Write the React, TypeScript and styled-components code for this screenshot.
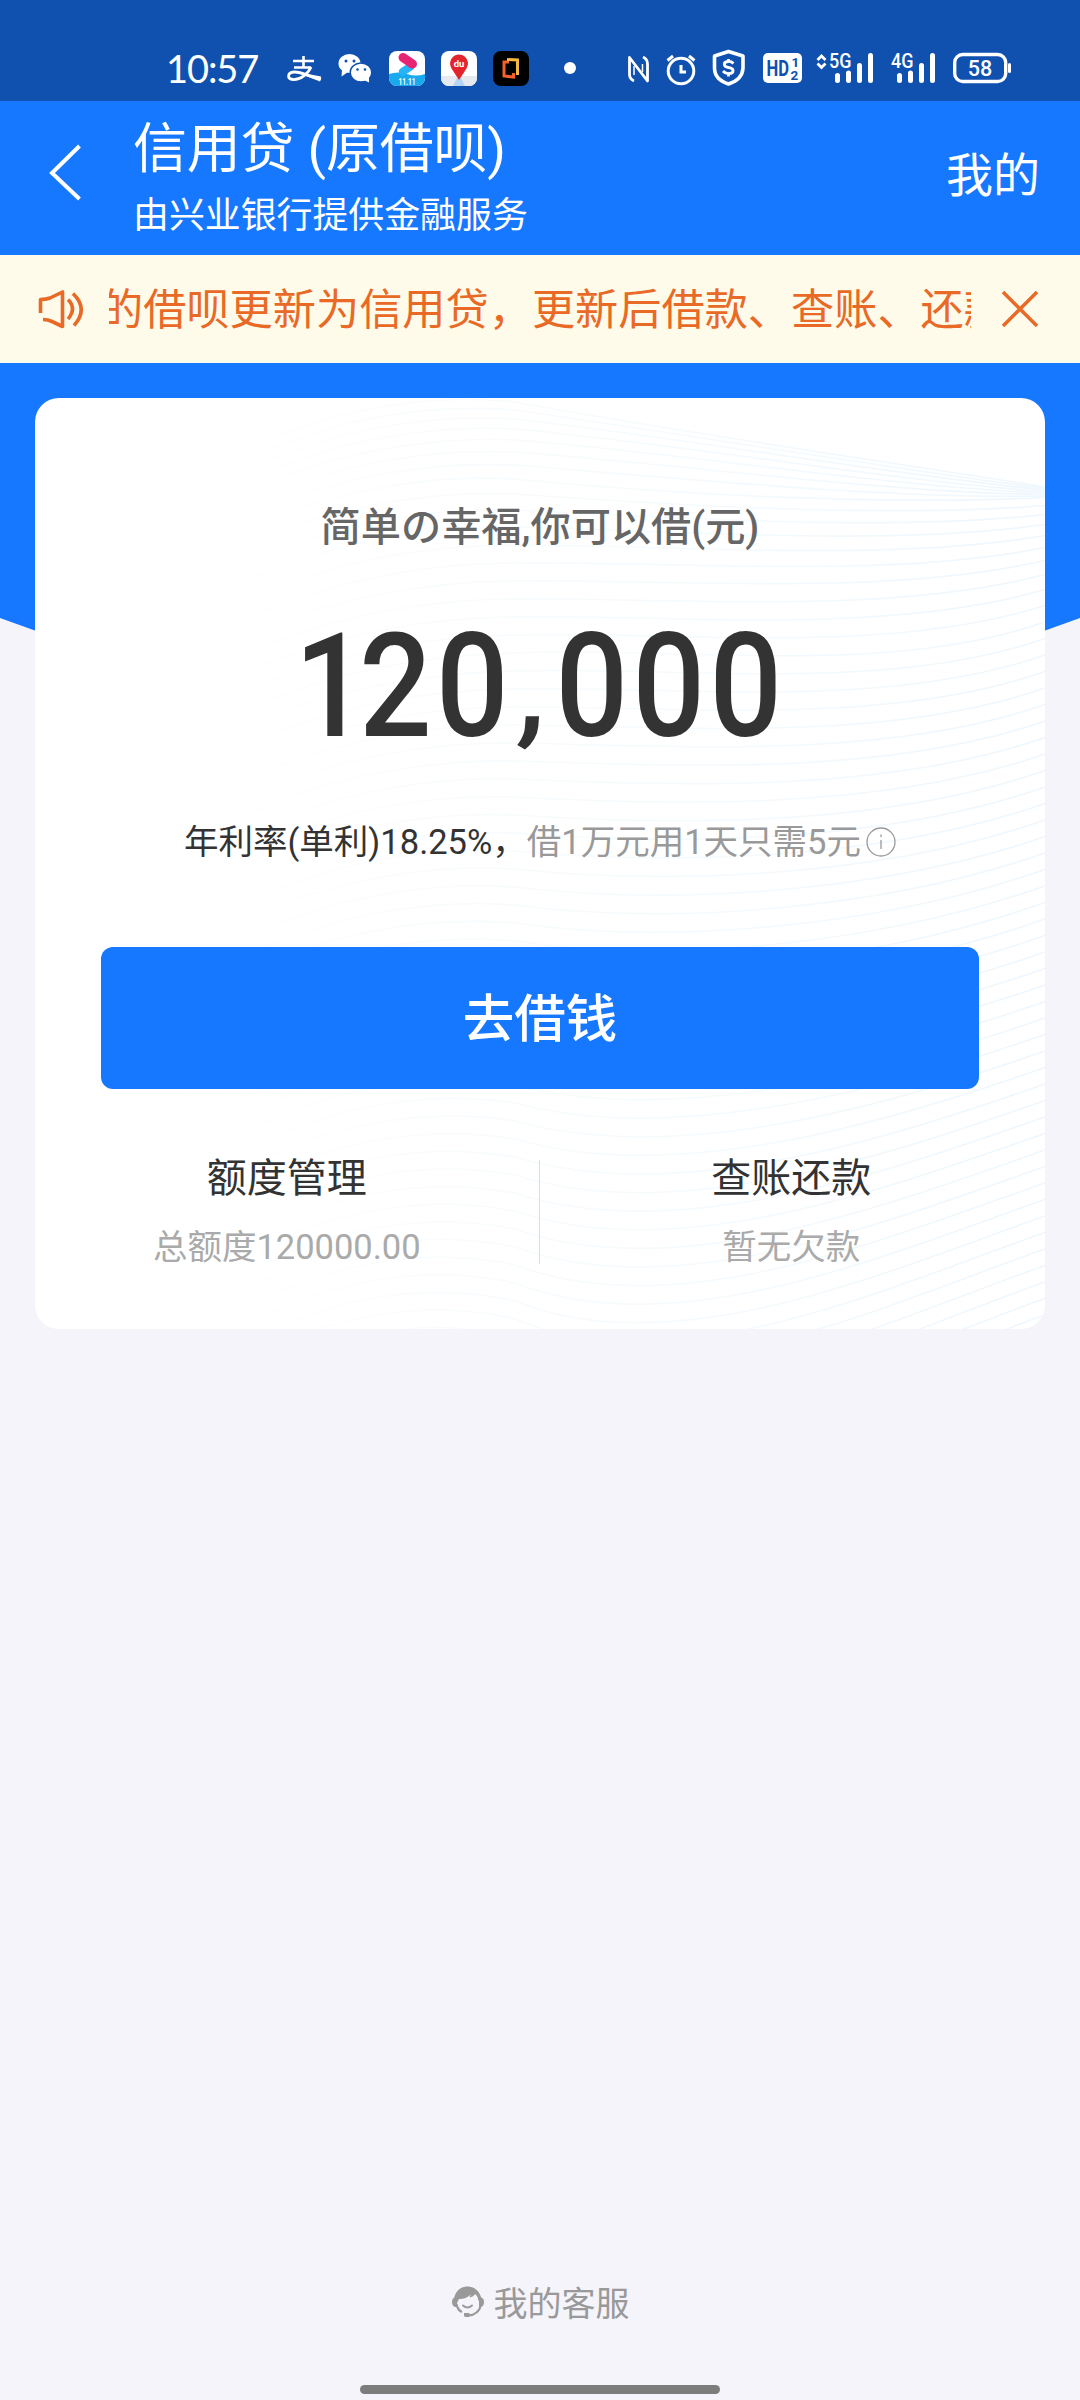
import React from 'react';
import styled, { createGlobalStyle } from 'styled-components';

const cjk = `'Noto Sans CJK SC', sans-serif`;

const Global = createGlobalStyle`
  body { margin: 0; background: #f4f4fa; }
  * { box-sizing: border-box; }
`;

const Page = styled.div`
  width: 1080px;
  height: 2400px;
  display: flex;
  flex-direction: column;
  background: #f4f4fa;
  font-family: Roboto, ${cjk};
  overflow: hidden;
`;

const StatusBar = styled.div`
  height: 101px;
  flex: none;
  display: flex;
  align-items: center;
  padding: 35px 0 0 166px;
  background: #1051b0;
  color: #fff;
`;

const Clock = styled.span`
  width: 121px;
  font: 400 38px/40px Lato, sans-serif;
  letter-spacing: -1.1px;
  white-space: nowrap;
`;

const StatusIcons = styled.svg`
  display: block;
  width: 740px;
  height: 56px;
`;

const Nav = styled.header`
  height: 154px;
  flex: none;
  display: flex;
  align-items: center;
  padding: 0 40px 0 47px;
  background: #1677ff;
  color: #fff;
`;

const BackIcon = styled.svg`
  width: 34px;
  height: 58px;
  margin: -12px 52px 0 0;
`;

const Titles = styled.div`
  flex: 1;
`;

const Title = styled.h1`
  margin: 0;
  font: 400 54px/67px Roboto, ${cjk};
  letter-spacing: -0.2px;
  white-space: pre;
`;

const Subtitle = styled.p`
  margin: 0;
  font: 400 35.9px/58px ${cjk};
`;

const Mine = styled.span`
  font: 400 47px/60px ${cjk};
  padding-bottom: 13px;
`;

const Notice = styled.div`
  height: 108px;
  flex: none;
  display: flex;
  align-items: center;
  padding: 0 42px 0 38px;
  background: #fffbeb;
  color: #e86a26;
`;

const NoticeIcon = styled.svg`
  width: 46px;
  height: 42px;
  flex: none;
`;

const NoticeText = styled.div`
  width: 862px;
  margin: -6px 0 0 25px;
  overflow: hidden;
  display: flex;
  white-space: nowrap;
  font: 400 43.2px/64px ${cjk};
`;

const NoticeRun = styled.span`
  margin-left: -9px;
`;

const CloseIcon = styled.svg`
  width: 36px;
  height: 36px;
  margin-left: 31px;
  flex: none;
`;

const Hero = styled.main`
  flex: none;
  height: 966px;
  padding: 35px 35px 0;
  background: linear-gradient(#1677ff, #1677ff) 0 0 / 100% 255px no-repeat;
  position: relative;
`;

const HeroCurve = styled.svg`
  position: absolute;
  left: 0;
  top: 255px;
  width: 1080px;
  height: 100px;
`;

const Card = styled.section`
  position: relative;
  height: 931px;
  display: flex;
  flex-direction: column;
  align-items: center;
  border-radius: 24px;
  background: #fff;
  overflow: hidden;
`;

const Waves = styled.svg`
  position: absolute;
  inset: 0;
  width: 1010px;
  height: 931px;
`;

const Greeting = styled.div`
  position: relative;
  margin-top: 100px;
  font: 500 40.2px/60px Roboto, ${cjk};
  color: #666;
`;

const Amount = styled.div`
  position: relative;
  margin-top: 43px;
  font: 500 145px/170px Roboto, sans-serif;
  letter-spacing: 5px;
  color: #333;
  transform: scaleX(0.88);
`;

const LeadDigit = styled.span`
  margin-right: -14px;
`;

const Comma = styled.span`
  display: inline-block;
  margin: 0 6px 0 5px;
  transform-origin: 50% 70%;
  transform: translateY(-3px) scaleY(0.84) skewX(-4deg);
`;

const Rate = styled.div`
  position: relative;
  margin-top: 46px;
  display: flex;
  align-items: center;
  font: 400 34.5px/50px Roboto, ${cjk};
  color: #333;
  white-space: nowrap;
`;

const RateHint = styled.span`
  color: #999;
`;

const InfoIcon = styled.svg`
  width: 30px;
  height: 30px;
  margin-left: 5px;
`;

const BorrowButton = styled.button`
  position: relative;
  width: 878px;
  height: 142px;
  margin-top: 80px;
  padding: 0 0 6px;
  border: 0;
  border-radius: 12px;
  background: #1677ff;
  color: #fff;
  font: 500 51.5px/70px ${cjk};
`;

const Links = styled.div`
  position: relative;
  display: flex;
  width: 100%;
  padding-right: 2px;
  margin-top: 56px;
`;

const LinkItem = styled.div`
  flex: 1;
  display: flex;
  flex-direction: column;
  align-items: center;
`;

const LinkTitle = styled.div`
  font: 400 40px/60px ${cjk};
  color: #333;
`;

const LinkNote = styled.div`
  margin-top: 17px;
  font: 400 34.5px/50px Roboto, ${cjk};
  color: #aaa;
`;

const Divider = styled.div`
  width: 1px;
  height: 104px;
  margin-top: 15px;
  background: #ddd;
`;

const Footer = styled.footer`
  margin-top: auto;
  height: 123px;
  display: flex;
  flex-direction: column;
  align-items: center;
`;

const Service = styled.div`
  display: flex;
  align-items: center;
  gap: 9px;
  font: 400 34px/50px ${cjk};
  color: #999;
`;

const ServiceIcon = styled.svg`
  width: 34px;
  height: 34px;
`;

const HomeBar = styled.div`
  width: 360px;
  height: 9px;
  margin-top: auto;
  margin-bottom: 6px;
  border-radius: 5px;
  background: #7c7c7c;
`;

function buildWaves(count: number) {
  const paths: string[] = [];
  let peak = 4;
  let mid = 48;
  let end = 89;
  for (let i = 0; i < count; i++) {
    const slope = Math.max(-0.35, 0.16 - i * 0.03);
    const c2 = end - slope * 160;
    const c1 = (8 * mid - peak - end - 3 * c2) / 3;
    paths.push(
      `M50 ${peak + 190}C130 ${peak + 60} 310 ${peak - (c1 - peak) * 0.6} 480 ${peak}C640 ${c1} 850 ${c2} 1010 ${end}`,
    );
    peak += Math.min(18, 8 + i);
    mid += Math.min(18, 4 + i * 1.1);
    end += i < 7 ? 1.5 : Math.min(16.5, 1 + i);
  }
  return paths;
}

const waves = buildWaves(60);

function SignalBars({ x }: { x: number }) {
  return (
    <path
      d={`M${x} 75.500V80.500M${x + 11} 73V80.500M${x + 22} 65.500V80.500M${x + 33} 55.500V80.500`}
      stroke="#fff"
      strokeWidth="5"
      strokeLinecap="round"
    />
  );
}

export default function App() {
  return (
    <Page>
      <Global />
      <StatusBar>
        <Clock>10:57</Clock>
        <StatusIcons viewBox="287 40 740 56" fill="none" fontFamily="Roboto, sans-serif">
          <path d="M293 61H314M303.500 56V67M294 67.500H311" stroke="#fff" strokeWidth="2.600" />
          <path d="M311 67C308 74 300 80 293 79.500C287 79 287 72.500 294 72C302 71.500 309 77 321 79" stroke="#fff" strokeWidth="2.800" />
          <path d="M308 74L321 76.500L320 81.500L306 76Z" fill="#fff" />
          <ellipse cx="349.500" cy="63.500" rx="11" ry="9.500" fill="#fff" />
          <path d="M342 70L341.500 76.500L348 72Z" fill="#fff" />
          <ellipse cx="361" cy="72.500" rx="10.800" ry="9.500" fill="#fff" stroke="#1051b0" strokeWidth="1.500" />
          <path d="M364 80L369 82.500L369 77Z" fill="#fff" />
          <g fill="#1051b0"><circle cx="346" cy="61" r="1.500" /><circle cx="354" cy="61" r="1.500" /><circle cx="357.500" cy="69.500" r="1.300" /><circle cx="365" cy="69.500" r="1.300" /></g>
          <rect x="389" y="51" width="36" height="35" rx="8" fill="#fff" />
          <path d="M389 74Q398 71 407 74T425 74V78A8 8 0 0 1 417 86H397A8 8 0 0 1 389 78Z" fill="#18a9ee" />
          <path d="M403 71.500L410 67" stroke="#25b4f5" strokeWidth="8" strokeLinecap="round" />
          <path d="M403 57.500L412.500 64" stroke="#e82572" strokeWidth="9" strokeLinecap="round" />
          <text x="398.500" y="84.500" textLength="17" lengthAdjust="spacingAndGlyphs" fontSize="8.500" fontWeight="700" fill="#fff">11.11</text>
          <rect x="441" y="51" width="36" height="35" rx="8" fill="#fff" />
          <path d="M441 76H477V78A8 8 0 0 1 469 86H449A8 8 0 0 1 441 78Z" fill="#e6e9ee" />
          <path d="M457 78H461L465 86H453Z" fill="#b3d4f2" />
          <path d="M459 80L451.500 68.500A9 9 0 1 1 466.500 68.500Z" fill="#e3242c" />
          <text x="459" y="67" textAnchor="middle" fontSize="9.500" fontWeight="700" fill="#fff">du</text>
          <rect x="493" y="51" width="36" height="35" rx="8" fill="#000" />
          <path d="M509 62H504V76L513.500 77V73" stroke="#f2622a" strokeWidth="3" />
          <path d="M507 59.500L517.500 60V75" stroke="#f6b93f" strokeWidth="3" />
          <circle cx="570" cy="68" r="6" fill="#fff" />
          <path d="M634 81Q629.500 79 629.500 74V57.500L647.500 81V64Q647.500 59 643 57" stroke="#fff" strokeWidth="2.800" strokeLinejoin="round" />
          <path d="M634 66V75M642.500 64V72" stroke="#fff" strokeWidth="1.500" />
          <g stroke="#fff" strokeWidth="3"><circle cx="681" cy="71" r="12.800" /><path d="M667.500 60.500L673 56M689 56L694.500 60.500M681 65V72H686" /></g>
          <path d="M728.500 51.500L743 56V68Q742.500 79.500 728.500 84Q714.500 79.500 714.500 68V56Z" stroke="#fff" strokeWidth="3.600" strokeLinejoin="round" />
          <path d="M733.500 63.500Q731 61 728 61.500C723 62 723 66.500 728.500 67.500C735 68.500 734 73.500 729 73.500Q725.500 74 723 71M728.500 59V62M728.500 73V76.500" stroke="#fff" strokeWidth="2.800" />
          <rect x="763" y="53" width="39" height="30" rx="5" fill="#fff" />
          <text x="766.500" y="76" textLength="22.500" lengthAdjust="spacingAndGlyphs" fontSize="21.500" fontWeight="700" fill="#1051b0">HD</text>
          <text x="791.500" y="67" fontSize="13.500" fontWeight="700" fill="#1051b0">1</text>
          <text x="790.500" y="79.500" fontSize="13.500" fontWeight="700" fill="#1051b0">2</text>
          <path d="M817.500 60L821.500 56L825.500 60M817.500 63.500L821.500 67.500L825.500 63.500" stroke="#fff" strokeWidth="2.800" />
          <text x="829" y="67.500" textLength="22.500" lengthAdjust="spacingAndGlyphs" fontSize="19.500" fontWeight="500" fill="#fff">5G</text>
          <SignalBars x={837.5} />
          <text x="891" y="67.500" textLength="22.500" lengthAdjust="spacingAndGlyphs" fontSize="19.500" fontWeight="500" fill="#fff">4G</text>
          <SignalBars x={899.5} />
          <rect x="954.700" y="54.500" width="51" height="27" rx="8" stroke="#fff" strokeWidth="3.400" />
          <path d="M1009.500 64.500V71.500" stroke="#fff" strokeWidth="3" strokeLinecap="round" />
          <text x="980" y="75.500" textAnchor="middle" fontSize="21.500" fontWeight="500" fill="#fff">58</text>
        </StatusIcons>
      </StatusBar>
      <Nav>
        <BackIcon viewBox="0 0 34 58" fill="none" stroke="#fff" strokeWidth="4"><path d="M32.500 3L5 30L32.500 56" /></BackIcon>
        <Titles>
          <Title>信用贷 (原借呗)</Title>
          <Subtitle>由兴业银行提供金融服务</Subtitle>
        </Titles>
        <Mine>我的</Mine>
      </Nav>
      <Notice>
        <NoticeIcon viewBox="0 0 46 42" fill="none" stroke="#e86a26" strokeWidth="3.600" strokeLinejoin="round">
          <path d="M2.500 25V11.500Q8 11.500 12 10L24.500 4V38.500L14 33.500Q10 31.500 5 31.500" />
          <path d="M30 11.500Q39 20.500 30 31M35 5.500Q51 21 36 37.500" />
        </NoticeIcon>
        <NoticeText><NoticeRun>的借呗更新为信用贷，更新后借款、查账、还款</NoticeRun></NoticeText>
        <CloseIcon viewBox="0 0 36 36" stroke="#e86a26" strokeWidth="3.500"><path d="M1 1L35 35M35 1L1 35" /></CloseIcon>
      </Notice>
      <Hero>
        <HeroCurve viewBox="0 0 1080 100"><path d="M0 0Q540 200 1080 0Z" fill="#1677ff" /></HeroCurve>
        <Card>
          <Waves viewBox="0 0 1010 931" fill="none" stroke="url(#waveFade)" strokeWidth="1.600">
            <defs>
              <linearGradient id="waveFade" gradientUnits="userSpaceOnUse" x1="50" y1="0" x2="1010" y2="0">
                <stop offset="0" stopColor="#f2f9fd" stopOpacity="0" />
                <stop offset="0.400" stopColor="#f2f9fd" stopOpacity="0.500" />
                <stop offset="1" stopColor="#eef7fd" stopOpacity="1" />
              </linearGradient>
            </defs>
            {waves.map((d, i) => <path key={i} d={d} />)}
          </Waves>
          <Greeting>简单の幸福,你可以借(元)</Greeting>
          <Amount><LeadDigit>1</LeadDigit>20<Comma>,</Comma>000</Amount>
          <Rate>
            年利率(单利)18.25%，<RateHint>借1万元用1天只需5元</RateHint>
            <InfoIcon viewBox="0 0 30 30" fill="none" stroke="#999" strokeWidth="1.300"><circle cx="15" cy="15" r="14" /><path d="M15 13V22M15 7.500V10" /></InfoIcon>
          </Rate>
          <BorrowButton>去借钱</BorrowButton>
          <Links>
            <LinkItem><LinkTitle>额度管理</LinkTitle><LinkNote>总额度120000.00</LinkNote></LinkItem>
            <Divider />
            <LinkItem><LinkTitle>查账还款</LinkTitle><LinkNote>暂无欠款</LinkNote></LinkItem>
          </Links>
        </Card>
      </Hero>
      <Footer>
        <Service>
          <ServiceIcon viewBox="0 0 34 34" fill="none">
            <path d="M3 14C4 6 10 1.500 16.500 1.500S29 6 30.500 14L27.500 16Q27 11 24 9Q22 13 18.500 12L20 9.500Q14 14.500 8 14L6 18Z" fill="#999" />
            <path d="M6 12V22H4Q1 21 1 17T4 12.500ZM28 12V22H30Q33 21 33 17T30 12.500Z" fill="#999" />
            <path d="M30 20Q27.500 30 17 30.500H13.500M5.500 19Q6.500 25 11 27" stroke="#999" strokeWidth="2.200" />
            <path d="M13 28H18.500V32H15Q13 32 13 30Z" fill="#999" />
            <path d="M12 20.500Q16.500 24.500 21 20.500" stroke="#999" strokeWidth="1.900" strokeLinecap="round" />
          </ServiceIcon>
          我的客服
        </Service>
        <HomeBar />
      </Footer>
    </Page>
  );
}
